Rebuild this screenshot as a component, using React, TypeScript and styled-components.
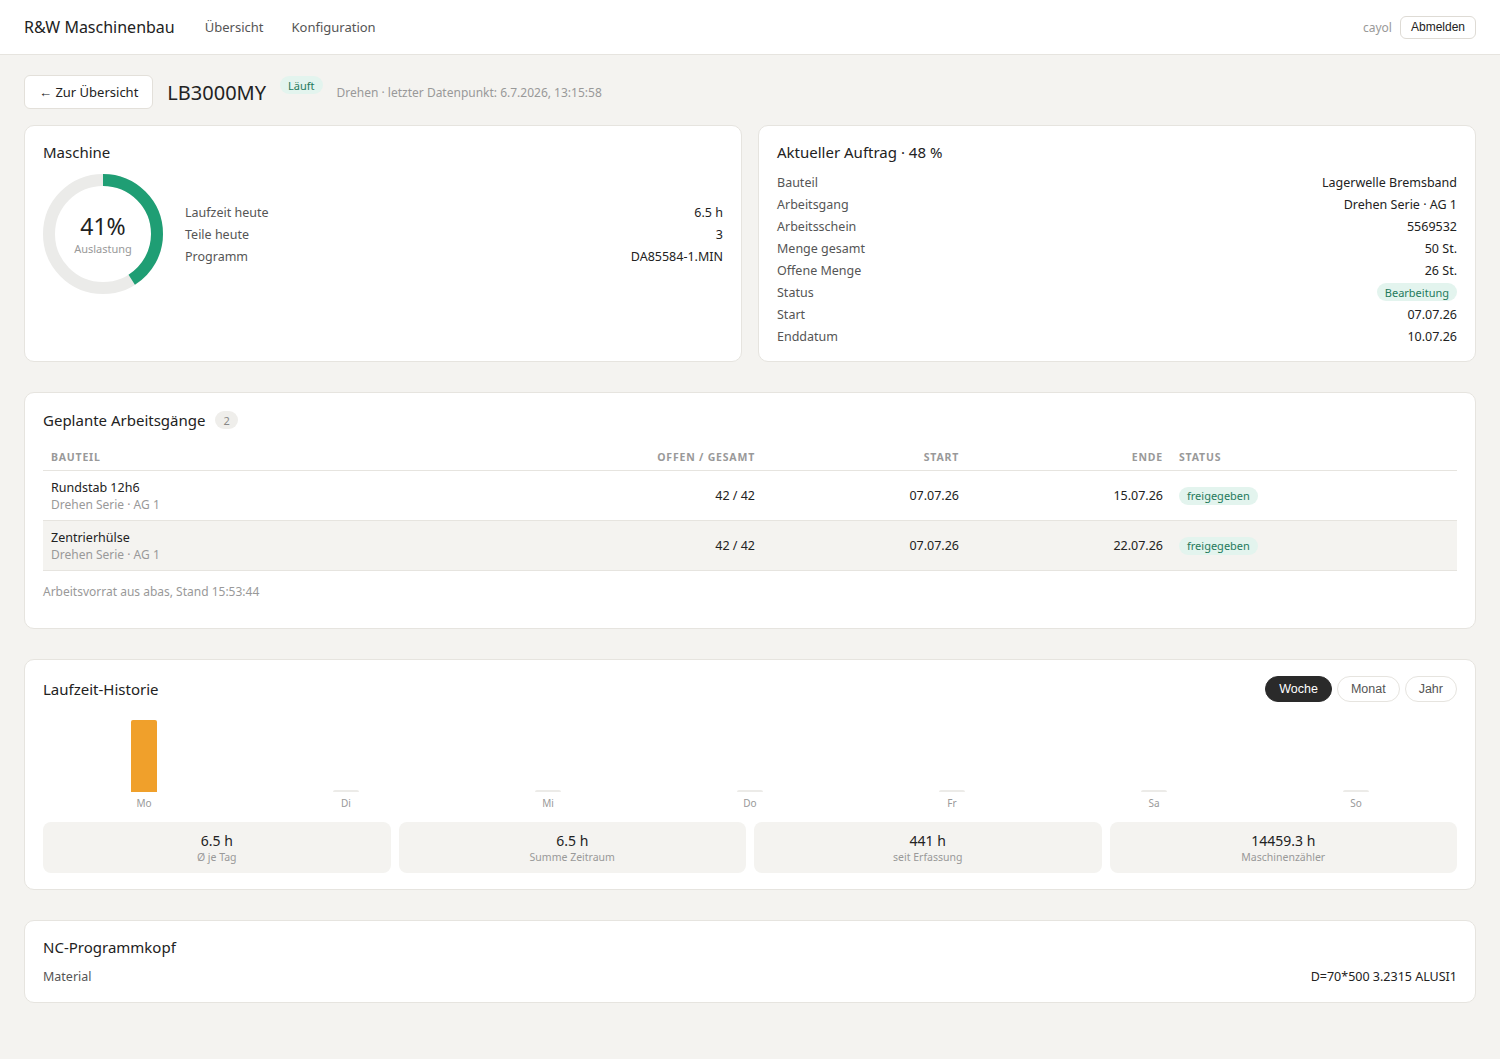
import styled, { createGlobalStyle } from "styled-components";

const GlobalStyle = createGlobalStyle`
  html, body {
    margin: 0;
    padding: 0;
    background: #f4f3f0;
    font-family: "Noto Sans", "Open Sans", sans-serif;
    color: #222;
  }
  * { box-sizing: border-box; }
`;

const Header = styled.header`
  height: 55px;
  background: #fff;
  border-bottom: 1px solid #e6e4df;
  display: flex;
  align-items: center;
  padding: 0 24px;
`;

const Brand = styled.div`
  font-size: 16px;
  color: #222;
  margin-right: 30px;
`;

const Nav = styled.nav`
  display: flex;
  gap: 28px;
  flex: 1;
`;

const NavLink = styled.a`
  font-size: 13px;
  color: #555;
  text-decoration: none;
`;

const User = styled.span`
  font-size: 12px;
  color: #999;
  margin-right: 8px;
`;

const SmallButton = styled.button`
  font-family: "Liberation Sans", Arial, sans-serif;
  font-size: 12px;
  color: #222;
  background: #fff;
  border: 1px solid #dedbd5;
  border-radius: 6px;
  height: 23px;
  padding: 0 10px;
`;

const Main = styled.main`
  padding: 20px 24px 56px;
  display: flex;
  flex-direction: column;
`;

const TopBar = styled.div`
  display: flex;
  align-items: center;
  gap: 14px;
  margin-bottom: 16px;
`;

const BackButton = styled.button`
  font-family: "Noto Sans", sans-serif;
  font-size: 13px;
  color: #222;
  background: #fff;
  border: 1px solid #e3e0da;
  border-radius: 6px;
  height: 34px;
  padding: 0 14px;
`;

const MachineName = styled.h1`
  font-size: 20px;
  font-weight: 400;
  margin: 0;
`;

const Pill = styled.span<{ $tone?: "green" | "gray" }>`
  display: inline-flex;
  align-items: center;
  height: 18px;
  padding: 0 8px;
  border-radius: 9px;
  font-size: 11px;
  background: ${(p) => (p.$tone === "gray" ? "#efeeeb" : "#e3f4ee")};
  color: ${(p) => (p.$tone === "gray" ? "#888" : "#1f7a5c")};
`;

const TopPill = styled(Pill)`
  align-self: flex-start;
  margin-top: 1px;
`;

const Meta = styled.span`
  font-size: 12px;
  color: #999;
`;

const TwoCols = styled.div`
  display: grid;
  grid-template-columns: 1fr 1fr;
  gap: 16px;
  margin-bottom: 30px;
`;

const Card = styled.section<{ $last?: boolean }>`
  background: #fff;
  border: 1px solid #e6e4df;
  border-radius: 10px;
  padding: 16px 18px 14px;
  margin-bottom: ${(p) => (p.$last ? 0 : 30)}px;
`;

const GridCard = styled(Card)`
  margin-bottom: 0;
`;

const TableCard = styled(Card)`
  padding-top: 17px;
  padding-bottom: 15px;
`;

const NcCard = styled(Card)`
  padding-bottom: 15px;
`;

const CardHeader = styled.div`
  display: flex;
  align-items: center;
  justify-content: space-between;
  gap: 10px;
  min-height: 20px;
`;

const CardTitle = styled.h2`
  font-size: 15px;
  font-weight: 400;
  margin: 0;
  display: flex;
  align-items: center;
  gap: 10px;
`;

const MachineBody = styled.div`
  display: flex;
  align-items: center;
  gap: 22px;
  margin-top: 12px;
`;

const Donut = styled.div`
  position: relative;
  width: 120px;
  height: 120px;
  flex-shrink: 0;
`;

const DonutCenter = styled.div`
  position: absolute;
  inset: 0;
  display: flex;
  flex-direction: column;
  align-items: center;
  justify-content: center;
`;

const DonutValue = styled.div`
  font-size: 23px;
  line-height: 26px;
  color: #222;
`;

const DonutLabel = styled.div`
  font-size: 11px;
  color: #999;
  margin-top: 2px;
`;

const KvList = styled.div<{ $top?: number }>`
  flex: 1;
  display: flex;
  flex-direction: column;
  margin-top: ${(p) => p.$top ?? 0}px;
`;

const KvRow = styled.div`
  display: flex;
  justify-content: space-between;
  align-items: center;
  height: 22px;
  font-size: 12.5px;
`;

const KvKey = styled.span`
  color: #555;
`;

const KvValue = styled.span`
  color: #222;
`;

const TableGrid = styled.div<{ $head?: boolean; $alt?: boolean }>`
  display: grid;
  grid-template-columns: 1fr 200px 204px 204px 286px;
  align-items: center;
  min-height: ${(p) => (p.$head ? 28 : 50)}px;
  border-bottom: 1px solid #e6e4df;
  background: ${(p) => (p.$alt ? "#f4f3f0" : "transparent")};
`;

const Th = styled.div<{ $right?: boolean }>`
  padding: 0 8px;
  font-size: 10.5px;
  font-weight: 700;
  letter-spacing: 0.8px;
  text-transform: uppercase;
  color: #999;
  text-align: ${(p) => (p.$right ? "right" : "left")};
`;

const Td = styled.div<{ $right?: boolean }>`
  padding: 0 8px;
  font-size: 12.5px;
  color: #222;
  text-align: ${(p) => (p.$right ? "right" : "left")};
`;

const PartName = styled.div`
  font-size: 12.5px;
  line-height: 17px;
`;

const PartSub = styled.div`
  font-size: 12px;
  line-height: 17px;
  color: #999;
`;

const Table = styled.div`
  margin-top: 13px;
`;

const Footnote = styled.div`
  font-size: 12px;
  color: #999;
  margin: 12px 0 13px;
`;

const Toggle = styled.div`
  display: flex;
  gap: 5px;
`;

const ToggleBtn = styled.button<{ $active?: boolean }>`
  font-family: "Liberation Sans", Arial, sans-serif;
  font-size: 12.5px;
  height: 26px;
  padding: 0 13px;
  border-radius: 13px;
  border: 1px solid ${(p) => (p.$active ? "#2a2a2a" : "#e6e4df")};
  background: ${(p) => (p.$active ? "#2a2a2a" : "#fff")};
  color: ${(p) => (p.$active ? "#fff" : "#555")};
`;

const Chart = styled.div`
  display: grid;
  grid-template-columns: repeat(7, 1fr);
  margin-top: 16px;
`;

const ChartCol = styled.div`
  display: flex;
  flex-direction: column;
  align-items: center;
`;

const BarArea = styled.div`
  height: 74px;
  display: flex;
  align-items: flex-end;
`;

const Bar = styled.div<{ $empty?: boolean }>`
  width: 26px;
  background: ${(p) => (p.$empty ? "#ecebe8" : "#f0a02b")};
  border-radius: 2px 2px 0 0;
`;

const DayLabel = styled.div`
  font-size: 10px;
  color: #999;
  margin-top: 4px;
`;

const Stats = styled.div`
  display: grid;
  grid-template-columns: repeat(4, 1fr);
  gap: 8px;
  margin-top: 12px;
  margin-bottom: 2px;
`;

const Stat = styled.div`
  background: #f4f3f0;
  border-radius: 8px;
  height: 51px;
  display: flex;
  flex-direction: column;
  align-items: center;
  justify-content: center;
`;

const StatValue = styled.div`
  font-size: 14px;
  line-height: 18px;
`;

const StatLabel = styled.div`
  font-size: 10.5px;
  color: #999;
`;

const order = [
  ["Bauteil", "Lagerwelle Bremsband"],
  ["Arbeitsgang", "Drehen Serie · AG 1"],
  ["Arbeitsschein", "5569532"],
  ["Menge gesamt", "50 St."],
  ["Offene Menge", "26 St."],
  ["Status", "Bearbeitung"],
  ["Start", "07.07.26"],
  ["Enddatum", "10.07.26"],
];

const ops = [
  { name: "Rundstab 12h6", sub: "Drehen Serie · AG 1", qty: "42 / 42", start: "07.07.26", end: "15.07.26" },
  { name: "Zentrierhülse", sub: "Drehen Serie · AG 1", qty: "42 / 42", start: "07.07.26", end: "22.07.26" },
];

const days = [
  { d: "Mo", h: 6.5 },
  { d: "Di", h: 0 },
  { d: "Mi", h: 0 },
  { d: "Do", h: 0 },
  { d: "Fr", h: 0 },
  { d: "Sa", h: 0 },
  { d: "So", h: 0 },
];

const stats = [
  ["6.5 h", "Ø je Tag"],
  ["6.5 h", "Summe Zeitraum"],
  ["441 h", "seit Erfassung"],
  ["14459.3 h", "Maschinenzähler"],
];

function Ring({ pct }: { pct: number }) {
  const r = 54;
  const c = 2 * Math.PI * r;
  return (
    <svg width="120" height="120" viewBox="0 0 120 120">
      <circle cx="60" cy="60" r={r} fill="none" stroke="#ebebe9" strokeWidth="12" />
      <circle
        cx="60"
        cy="60"
        r={r}
        fill="none"
        stroke="#1f9e74"
        strokeWidth="12"
        strokeDasharray={`${c * pct} ${c}`}
        transform="rotate(-90 60 60)"
      />
    </svg>
  );
}

export default function App() {
  const maxH = 6.5;
  return (
    <>
      <GlobalStyle />
      <Header>
        <Brand>R&amp;W Maschinenbau</Brand>
        <Nav>
          <NavLink>Übersicht</NavLink>
          <NavLink>Konfiguration</NavLink>
        </Nav>
        <User>cayol</User>
        <SmallButton>Abmelden</SmallButton>
      </Header>
      <Main>
        <TopBar>
          <BackButton>← Zur Übersicht</BackButton>
          <MachineName>LB3000MY</MachineName>
          <TopPill>Läuft</TopPill>
          <Meta>Drehen · letzter Datenpunkt: 6.7.2026, 13:15:58</Meta>
        </TopBar>

        <TwoCols>
          <GridCard>
            <CardTitle>Maschine</CardTitle>
            <MachineBody>
              <Donut>
                <Ring pct={0.41} />
                <DonutCenter>
                  <DonutValue>41%</DonutValue>
                  <DonutLabel>Auslastung</DonutLabel>
                </DonutCenter>
              </Donut>
              <KvList>
                <KvRow><KvKey>Laufzeit heute</KvKey><KvValue>6.5 h</KvValue></KvRow>
                <KvRow><KvKey>Teile heute</KvKey><KvValue>3</KvValue></KvRow>
                <KvRow><KvKey>Programm</KvKey><KvValue>DA85584-1.MIN</KvValue></KvRow>
              </KvList>
            </MachineBody>
          </GridCard>
          <GridCard>
            <CardTitle>Aktueller Auftrag · 48 %</CardTitle>
            <KvList $top={9}>
              {order.map(([k, v]) => (
                <KvRow key={k}>
                  <KvKey>{k}</KvKey>
                  {k === "Status" ? <Pill>{v}</Pill> : <KvValue>{v}</KvValue>}
                </KvRow>
              ))}
            </KvList>
          </GridCard>
        </TwoCols>

        <TableCard>
          <CardHeader>
            <CardTitle>
              Geplante Arbeitsgänge <Pill $tone="gray">2</Pill>
            </CardTitle>
          </CardHeader>
          <Table>
            <TableGrid $head>
              <Th>Bauteil</Th>
              <Th $right>Offen / Gesamt</Th>
              <Th $right>Start</Th>
              <Th $right>Ende</Th>
              <Th>Status</Th>
            </TableGrid>
            {ops.map((o, i) => (
              <TableGrid key={o.name} $alt={i === 1}>
                <Td>
                  <PartName>{o.name}</PartName>
                  <PartSub>{o.sub}</PartSub>
                </Td>
                <Td $right>{o.qty}</Td>
                <Td $right>{o.start}</Td>
                <Td $right>{o.end}</Td>
                <Td><Pill>freigegeben</Pill></Td>
              </TableGrid>
            ))}
          </Table>
          <Footnote>Arbeitsvorrat aus abas, Stand 15:53:44</Footnote>
        </TableCard>

        <Card>
          <CardHeader>
            <CardTitle>Laufzeit-Historie</CardTitle>
            <Toggle>
              <ToggleBtn $active>Woche</ToggleBtn>
              <ToggleBtn>Monat</ToggleBtn>
              <ToggleBtn>Jahr</ToggleBtn>
            </Toggle>
          </CardHeader>
          <Chart>
            {days.map((d) => (
              <ChartCol key={d.d}>
                <BarArea>
                  <Bar $empty={d.h === 0} style={{ height: d.h === 0 ? 2 : (d.h / maxH) * 72 }} />
                </BarArea>
                <DayLabel>{d.d}</DayLabel>
              </ChartCol>
            ))}
          </Chart>
          <Stats>
            {stats.map(([v, l]) => (
              <Stat key={l}>
                <StatValue>{v}</StatValue>
                <StatLabel>{l}</StatLabel>
              </Stat>
            ))}
          </Stats>
        </Card>

        <NcCard $last>
          <CardTitle>NC-Programmkopf</CardTitle>
          <KvList $top={8}>
            <KvRow><KvKey>Material</KvKey><KvValue>D=70*500 3.2315 ALUSI1</KvValue></KvRow>
          </KvList>
        </NcCard>
      </Main>
    </>
  );
}
